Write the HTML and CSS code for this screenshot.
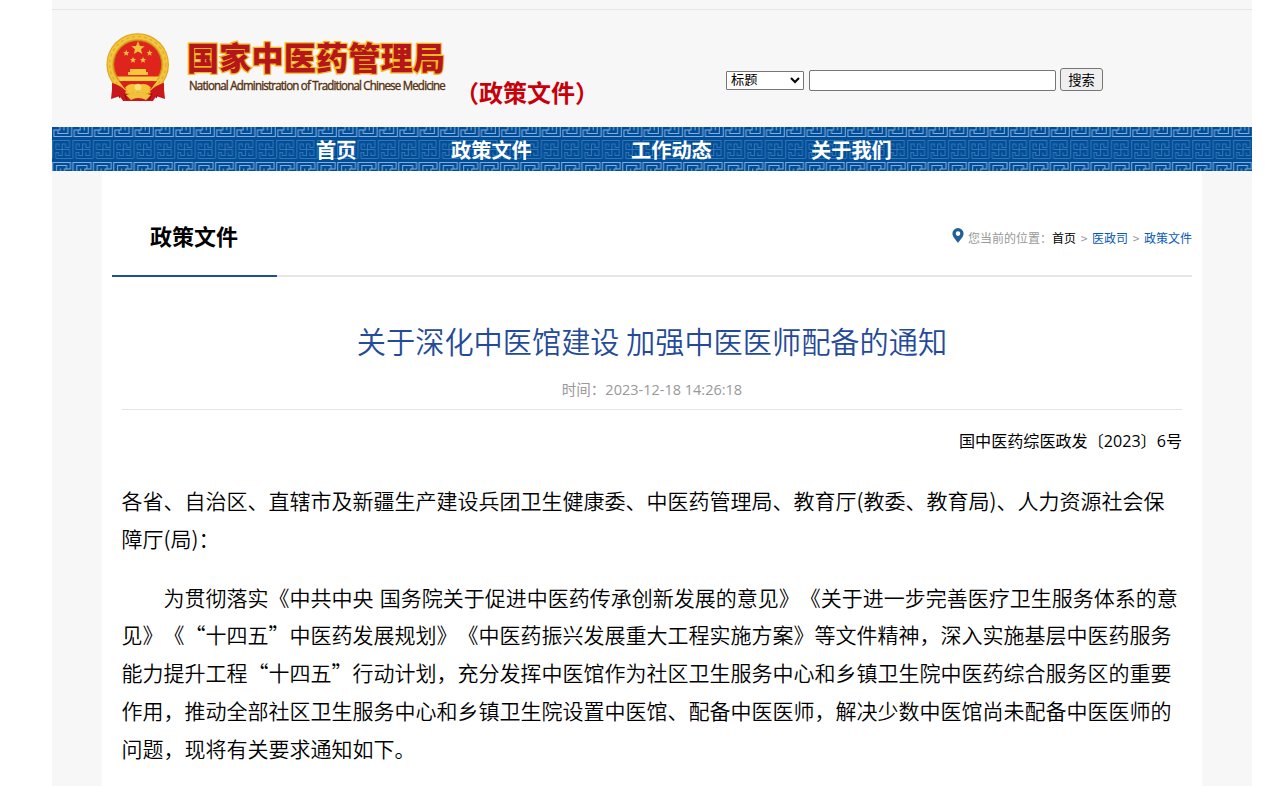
FILE: index.html
```html
<!DOCTYPE html>
<html lang="zh-CN">
<head>
<meta charset="utf-8">
<title>关于深化中医馆建设 加强中医医师配备的通知</title>
<link rel="stylesheet" href="styles.css">
</head>
<body>
<div class="page">
  <header class="header">
    <svg class="emblem" viewBox="0 0 64 69" width="64" height="69">
      <path d="M7 47 L5 66 L14 63 L17 68 H47 L50 63 L59 66 L57 47Z" fill="#c8161d"/>
      <path d="M10 54 L14 65 M17 58 L21 67 M54 54 L50 65 M47 58 L43 67" stroke="#8e0c10" stroke-width="1.2"/>
      <circle cx="31.7" cy="31.5" r="31.3" fill="#e3a722"/>
      <circle cx="31.7" cy="31.5" r="27.8" fill="none" stroke="#f2c740" stroke-width="4.500"/>
      <circle cx="31.7" cy="31.5" r="28" fill="none" stroke="#e4ae2b" stroke-width="1.500" stroke-dasharray="3 3"/>
      <circle cx="31.7" cy="31.5" r="24" fill="#df241d" stroke="#c58b18"/>
      <path d="M11 43.5H53L50 48H14Z" fill="#f8cf45"/>
      <path d="M22 42V39H24V36H40V39H42V42Z" fill="#f6c63b"/>
      <path d="M13 48 Q32 51 51 48 L45 56 H19Z" fill="#d91e1c"/>
      <path d="M6 50Q14 52 20 58L16 66L13 62L6 64Z M58 50Q50 52 44 58L48 66L51 62L58 64Z" fill="#ca171c"/>
      <path id="star" d="M32 8 L33.9 12.900 L38.6 13.2 L35 16.300 L36.200 21 L32 18.400 L27.800 21 L29 16.300 L25.400 13.2 L30.100 12.900Z" fill="#f2c23f"/>
      <use href="#star" transform="translate(5.5 13) scale(.46)"/>
      <use href="#star" transform="translate(28.9 13) scale(.46)"/>
      <use href="#star" transform="translate(12.3 20) scale(.46)"/>
      <use href="#star" transform="translate(22.3 20) scale(.46)"/>
      <path d="M19 55 Q23 49 32 52 Q41 49 45 55 L39 60 Q32 55 25 60Z" fill="#f5c338"/>
      <circle cx="32" cy="54" r="3.3" fill="#fbe37a"/>
      <path d="M20 62 Q32 57 45 62 L40 67 Q32 63 25 67Z" fill="#efc13c"/>
    </svg>
    <svg class="wordmark" width="262" height="60" viewBox="0 0 262 60" role="img">
      <text class="wordmark-cn" x="2" y="32.5" textLength="258">国家中医药管理局</text>
      <text class="wordmark-en" transform="translate(4 53) scale(1 1.13)" x="0" y="0" textLength="256">National Administration of Traditional Chinese Medicine</text>
    </svg>
    <div class="channel">（政策文件）</div>
    <form class="search">
      <select class="field"><option>标题</option></select>
      <input class="query" type="text">
      <button class="submit" type="button">搜索</button>
    </form>
  </header>
  <nav class="nav">
    <svg class="fret" width="1200" height="44">
      <defs>
        <pattern id="meander" width="20.36" height="44" patternUnits="userSpaceOnUse">
          <g fill="none" stroke="#86addb">
            <path id="key" d="M.7 45V35.5H18.5V42H12.5V45 M4.5 45V38.5H14.5V42 M8.5 45V41.500"/>
            <use href="#key" transform="rotate(180 10.18 22.500)"/>
          </g>
          <path d="M.7 31.5V13.5H17.5V20.5H13.5V17H10.2V28.5H6.5V26 M3.8 31.5H20.8 M3.8 31.5V25.5H7 M3.8 22.5H17.5V28.5H13.5V25.5 M3.8 22.5V17H7V20" fill="none" stroke="#3775b3"/>
        </pattern>
      </defs>
      <rect width="1200" height="44" fill="url(#meander)"/>
    </svg>
    <a class="home">首页</a><a>政策文件</a><a>工作动态</a><a>关于我们</a>
  </nav>
  <main class="main">
    <div class="bar">
      <h2 class="section">政策文件</h2>
      <div class="crumbs">
        <svg width="12" height="15" viewBox="0 0 12 15"><path fill="#235f98" fill-rule="evenodd" d="M6 0A5.6 5.6 0 0 0 .4 5.6C.4 9 4 12 6 15C8 12 11.600 9 11.600 5.600A5.600 5.600 0 0 0 6 0ZM6 3.300A2.300 2.300 0 1 1 6 7.900A2.300 2.300 0 0 1 6 3.300Z"/></svg>
        <span class="where">您当前的位置：</span><a class="root">首页</a><i>&gt;</i><a>医政司</a><i>&gt;</i><a>政策文件</a>
      </div>
    </div>
    <article class="article">
      <h1>关于深化中医馆建设 加强中医医师配备的通知</h1>
      <div class="time">时间：2023-12-18 14:26:18</div>
      <p class="number">国中医药综医政发〔2023〕6号</p>
      <p>各省、自治区、直辖市及新疆生产建设兵团卫生健康委、中医药管理局、教育厅(教委、教育局)、人力资源社会保<br>障厅(局)：</p>
      <p class="indent">为贯彻落实《中共中央<span class="gap"> </span>国务院关于促进中医药传承创新发展的意见》《关于进一步完善医疗卫生服务体系的意<br>见》《“十四五”中医药发展规划》《中医药振兴发展重大工程实施方案》等文件精神，深入实施基层中医药服务<br>能力提升工程“十四五”行动计划，充分发挥中医馆作为社区卫生服务中心和乡镇卫生院中医药综合服务区的重要<br>作用，推动全部社区卫生服务中心和乡镇卫生院设置中医馆、配备中医医师，解决少数中医馆尚未配备中医医师的<br>问题，现将有关要求通知如下。</p>
    </article>
  </main>
</div>
</body>
</html>
```
FILE: styles.css
```css
* { box-sizing: border-box; }
body {
  margin: 0;
  height: 786px;
  overflow: hidden;
  background: #fff;
  color: #000;
  font-family: "Noto Sans CJK SC", sans-serif;
  text-spacing-trim: space-all;
}
.page { width: 1200px; height: 786px; margin-left: 52px; background: #f7f7f7; }
.header {
  display: flex;
  align-items: flex-start;
  height: 127px;
  background: linear-gradient(#e6e6e6, #e6e6e6) 0 9px / 100% 1px no-repeat;
}
.emblem { margin: 33px 0 0 54px; flex: none; }
.wordmark { margin: 37px 0 0 15px; flex: none; overflow: visible; }
.wordmark-cn {
  font-size: 32px;
  font-weight: 900;
  fill: #b5161c;
  stroke: #f5b81c;
  stroke-width: 2.6px;
  paint-order: stroke;
}
.wordmark-en { font: 11.500px "Open Sans", sans-serif; letter-spacing: -.8px; fill: #553010; stroke: #553010; stroke-width: .35px; }
.channel {
  width: 150px;
  margin: 74px 0 0 8px;
  font-size: 24px;
  line-height: 36px;
  font-weight: 700;
  color: #c7000b;
  white-space: nowrap;
}
.search { display: flex; align-items: flex-start; margin: 68px 0 0 121px; }
.search > * { font: 13.333px "Noto Sans CJK SC", sans-serif; margin: 0; }
.search .field { width: 78px; height: 19px; margin: 3px 5px 0 0; padding: 0 0 3px; font-family: "Liberation Sans", "Noto Sans CJK SC", sans-serif; background: #fff; border: 1px solid #767676; border-radius: 1px; }
.search .query { width: 247px; height: 21px; margin: 2px 4px 0 0; background: #fff; border: 1px solid #767676; border-radius: 2px; }
.search .submit { width: 43px; height: 23px; padding: 0; line-height: 20px; background: #efefef; border: 1px solid #767676; border-radius: 3px; }
.nav { position: relative; display: flex; height: 44px; padding-left: 264px; background: #004e98; }
.fret { position: absolute; left: 0; top: 0; }
.nav a {
  position: relative;
  width: 180px;
  color: #fff;
  font-size: 20.200px;
  line-height: 46px;
  font-weight: 700;
}
.nav .home { width: 135px; }
.main { width: 1100px; height: 615px; margin: 0 auto; padding: 26px 10px 0; background: #fff; }
.bar {
  display: flex;
  justify-content: space-between;
  height: 80px;
  border-bottom: 2px solid #e6e6e6;
}
.section {
  width: 165px;
  height: 80px;
  margin: 0;
  padding-left: 38px;
  border-bottom: 2px solid #1f4f9c;
  font-size: 22px;
  line-height: 77px;
}
.crumbs { display: flex; align-items: center; height: 80px; font-size: 12px; color: #999; }
.crumbs svg { margin: -4px 4px 0 0; }
.crumbs a { color: #0859b3; }
.crumbs .root { color: #000; }
.crumbs i { width: 16px; text-align: center; font-style: normal; }
.article { padding: 40px 10px 0; }
h1 {
  margin: 0;
  text-align: center;
  color: #244a99;
  font-size: 29.200px;
  line-height: 46px;
  font-weight: 350;
  white-space: nowrap;
}
.time {
  height: 47px;
  padding-top: 13px;
  border-bottom: 1px solid #e6e6e6;
  text-align: center;
  color: #999;
  font-family: "Open Sans", "Noto Sans CJK SC", sans-serif;
  font-size: 14.500px;
  line-height: 28px;
}
.article p { margin: 0 0 21px -.5px; font-size: 21px; line-height: 37.800px; white-space: nowrap; font-weight: 350; }
.article .number {
  margin: 15px 0 25px;
  text-align: right;
  font-family: "Open Sans", "Noto Sans CJK SC", sans-serif;
  font-size: 16.100px;
  line-height: 32px;
  font-weight: 400;
}
.article .indent { text-indent: 42px; }
.gap { letter-spacing: 1.5px; }
```
